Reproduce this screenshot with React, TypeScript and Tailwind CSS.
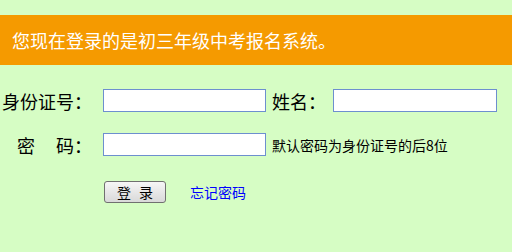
const cjk = { fontFamily: '"Noto Sans CJK SC", "Noto Sans", sans-serif' };

export default function App() {
  return (
    <div className="h-[252px] w-[512px] overflow-hidden bg-[#d6fdc4] pt-[15px]" style={cjk}>
      <div className="flex h-[50px] items-center bg-[#f59a00] pl-[12px] text-[18px] text-white">
        您现在登录的是初三年级中考报名系统。
      </div>

      <div className="mt-[24px] flex h-[23px] items-center">
        <span className="w-[103px] pr-[11px] text-right text-[18px] leading-none text-black">身份证号：</span>
        <input className="h-[23px] w-[163px] border border-[#6d8fcf] bg-white outline-none" />
        <span className="ml-[6px] w-[61px] text-[18px] leading-none text-black">姓名：</span>
        <input className="h-[23px] w-[164px] border border-[#6d8fcf] bg-white outline-none" />
      </div>

      <div className="mt-[21px] flex h-[23px] items-center">
        <span className="flex w-[103px] justify-end pr-[11px] text-[18px] leading-none text-black">
          <span>密</span>
          <span className="ml-[21px]">码：</span>
        </span>
        <input className="h-[23px] w-[163px] border border-[#6d8fcf] bg-white outline-none" />
        <span className="ml-[6px] text-[14px] leading-none text-black">默认密码为身份证号的后8位</span>
      </div>

      <div className="mt-[25px] flex h-[22px] items-center pl-[104px]">
        <button className="flex h-[22px] w-[62px] items-center justify-center gap-[8px] rounded-[3px] border border-[#707070] bg-gradient-to-b from-[#f6f6f6] to-[#d9d9d9] text-[14px] leading-none text-black">
          <span>登</span>
          <span>录</span>
        </button>
        <a href="#" className="ml-[24px] text-[14px] leading-none text-[#0000ff]">
          忘记密码
        </a>
      </div>
    </div>
  );
}
